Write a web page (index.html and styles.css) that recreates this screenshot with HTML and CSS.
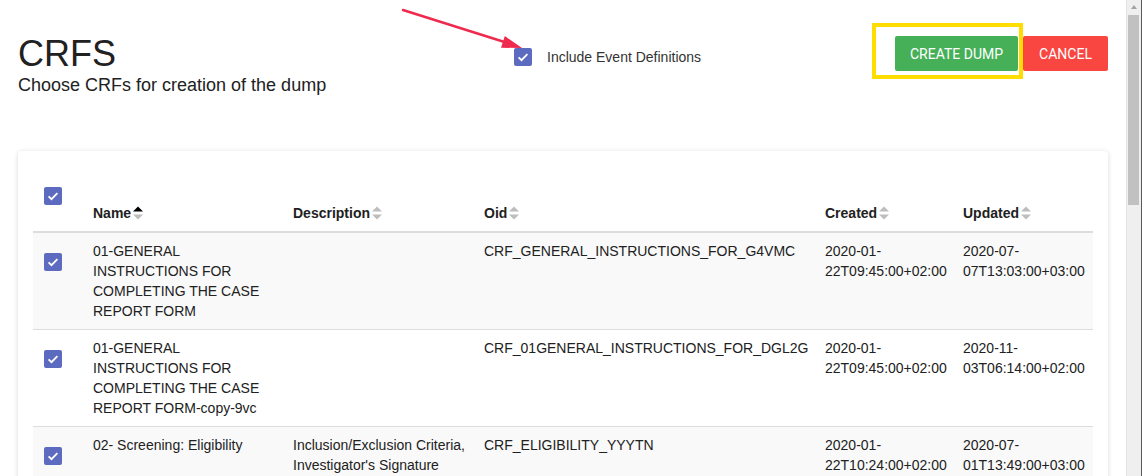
FILE: index.html
```html
<!DOCTYPE html>
<html>
<head>
<meta charset="utf-8">
<link rel="stylesheet" href="styles.css">
</head>
<body>
<div class="window">
  <div class="page">
    <svg class="annotation-arrow" width="600" height="80" viewBox="0 0 600 80">
      <line x1="403" y1="10" x2="506" y2="42.5" stroke="#ee2a4f" stroke-width="2.5" stroke-linecap="round"/>
      <polygon points="522,48 501,47.8 504.8,36" fill="#ee2a4f"/>
    </svg>
    <header class="top">
      <div class="titles">
        <h1 class="title">CRFS</h1>
        <p class="subtitle">Choose CRFs for creation of the dump</p>
      </div>
      <label class="include">
        <svg class="cb" width="18" height="18" viewBox="0 0 18 18"><rect width="18" height="18" rx="2" fill="#5c6bc0"/><path d="M4.6 9.3l2.9 2.9 5.9-6.1" fill="none" stroke="#fff" stroke-width="1.8"/></svg>
        <span>Include Event Definitions</span>
      </label>
      <div class="actions">
        <button class="btn btn-create">CREATE DUMP</button>
        <button class="btn btn-cancel">CANCEL</button>
        <div class="highlight"></div>
      </div>
    </header>

    <section class="card">
      <table class="crfs">
        <colgroup>
          <col class="c-check"><col class="c-name"><col class="c-desc"><col class="c-oid"><col class="c-date"><col class="c-date">
        </colgroup>
        <thead>
          <tr>
            <th class="check-cell"><svg class="cb" width="18" height="18" viewBox="0 0 18 18"><rect width="18" height="18" rx="2" fill="#5c6bc0"/><path d="M4.6 9.3l2.9 2.9 5.9-6.1" fill="none" stroke="#fff" stroke-width="1.8"/></svg></th>
            <th>Name<svg class="sort" width="10" height="14" viewBox="0 0 10 14"><path d="M0 5.5L5 0.5 10 5.5z" fill="#000"/><path d="M0 8.5L5 13.5 10 8.5z" fill="#bdbdbd"/></svg></th>
            <th>Description<svg class="sort" width="10" height="14" viewBox="0 0 10 14"><path d="M0 5.5L5 0.5 10 5.5z" fill="#bdbdbd"/><path d="M0 8.5L5 13.5 10 8.5z" fill="#bdbdbd"/></svg></th>
            <th>Oid<svg class="sort" width="10" height="14" viewBox="0 0 10 14"><path d="M0 5.5L5 0.5 10 5.5z" fill="#bdbdbd"/><path d="M0 8.5L5 13.5 10 8.5z" fill="#bdbdbd"/></svg></th>
            <th>Created<svg class="sort" width="10" height="14" viewBox="0 0 10 14"><path d="M0 5.5L5 0.5 10 5.5z" fill="#bdbdbd"/><path d="M0 8.5L5 13.5 10 8.5z" fill="#bdbdbd"/></svg></th>
            <th>Updated<svg class="sort" width="10" height="14" viewBox="0 0 10 14"><path d="M0 5.5L5 0.5 10 5.5z" fill="#bdbdbd"/><path d="M0 8.5L5 13.5 10 8.5z" fill="#bdbdbd"/></svg></th>
          </tr>
        </thead>
        <tbody>
          <tr>
            <td class="check-cell"><svg class="cb" width="18" height="18" viewBox="0 0 18 18"><rect width="18" height="18" rx="2" fill="#5c6bc0"/><path d="M4.6 9.3l2.9 2.9 5.9-6.1" fill="none" stroke="#fff" stroke-width="1.8"/></svg></td>
            <td>01-GENERAL INSTRUCTIONS FOR COMPLETING THE CASE REPORT FORM</td>
            <td></td>
            <td>CRF_GENERAL_INSTRUCTIONS_FOR_G4VMC</td>
            <td>2020-01-<wbr>22T09:45:00+02:00</td>
            <td>2020-07-<wbr>07T13:03:00+03:00</td>
          </tr>
          <tr>
            <td class="check-cell"><svg class="cb" width="18" height="18" viewBox="0 0 18 18"><rect width="18" height="18" rx="2" fill="#5c6bc0"/><path d="M4.6 9.3l2.9 2.9 5.9-6.1" fill="none" stroke="#fff" stroke-width="1.8"/></svg></td>
            <td>01-GENERAL INSTRUCTIONS FOR COMPLETING THE CASE REPORT FORM-copy-9vc</td>
            <td></td>
            <td>CRF_01GENERAL_INSTRUCTIONS_FOR_DGL2G</td>
            <td>2020-01-<wbr>22T09:45:00+02:00</td>
            <td>2020-11-<wbr>03T06:14:00+02:00</td>
          </tr>
          <tr>
            <td class="check-cell"><svg class="cb" width="18" height="18" viewBox="0 0 18 18"><rect width="18" height="18" rx="2" fill="#5c6bc0"/><path d="M4.6 9.3l2.9 2.9 5.9-6.1" fill="none" stroke="#fff" stroke-width="1.8"/></svg></td>
            <td>02- Screening: Eligibility</td>
            <td>Inclusion/Exclusion Criteria, Investigator's Signature</td>
            <td>CRF_ELIGIBILITY_YYYTN</td>
            <td>2020-01-<wbr>22T10:24:00+02:00</td>
            <td>2020-07-<wbr>01T13:49:00+03:00</td>
          </tr>
        </tbody>
      </table>
    </section>
  </div>
  <div class="scrollbar">
    <div class="sb-arrow"></div>
    <div class="sb-thumb"></div>
  </div>
</div>
</body>
</html>
```

FILE: styles.css
```css
html, body {
  margin: 0;
  padding: 0;
  background: #fff;
}
body {
  font-family: "Liberation Sans", Arial, sans-serif;
  color: #212121;
  font-size: 14px;
}
.window {
  display: flex;
  width: 1142px;
  height: 476px;
  overflow: hidden;
}
.page {
  position: relative;
  flex: 1;
  padding: 0 18px;
  overflow: hidden;
}
.annotation-arrow {
  position: absolute;
  left: 0;
  top: 0;
  z-index: 5;
}
.top {
  display: grid;
  grid-template-columns: 496px 1fr auto;
  align-items: start;
  padding-top: 35px;
}
.title {
  margin: 0;
  font-size: 36px;
  line-height: 38px;
  font-weight: 400;
  color: #212121;
}
.subtitle {
  margin: 0;
  font-size: 18px;
  line-height: 24px;
  color: #212121;
}
.include {
  display: flex;
  align-items: center;
  gap: 15px;
  margin-top: 13px;
  font-size: 14px;
  line-height: 18px;
  color: #333;
}
.cb {
  display: block;
}
.actions {
  position: relative;
  display: flex;
  gap: 5px;
  margin-top: 1px;
}
.btn {
  font-family: Roboto, "Liberation Sans", sans-serif;
  font-size: 14px;
  font-weight: 400;
  color: #fff;
  border: none;
  border-radius: 2px;
  height: 35px;
  padding: 0;
  white-space: nowrap;
  text-align: center;
}
.btn-create {
  background: #45b058;
  width: 123px;
}
.btn-cancel {
  background: #f94641;
  width: 85px;
}
.highlight {
  position: absolute;
  left: -23px;
  top: -13px;
  width: 151px;
  height: 56px;
  box-sizing: border-box;
  border: 4px solid #ffdd00;
}
.card {
  margin-top: 54px;
  background: #fff;
  border-radius: 4px;
  box-shadow: 0 1px 5px rgba(0, 0, 0, 0.16);
  padding: 15px;
}
.crfs {
  width: 1060px;
  table-layout: fixed;
  border-collapse: collapse;
}
.c-check { width: 52px; }
.c-name { width: 200px; }
.c-desc { width: 191px; }
.c-oid { width: 341px; }
.c-date { width: 138px; }
.crfs th {
  text-align: left;
  font-weight: 700;
  font-size: 14px;
  line-height: 20px;
  vertical-align: bottom;
  padding: 0 4px 8px 8px;
  border-bottom: 2px solid #ddd;
  white-space: nowrap;
}
.crfs th.check-cell {
  vertical-align: top;
  padding: 21px 0 26px 11px;
}
.sort {
  display: inline-block;
  vertical-align: -2px;
  margin-left: 2px;
}
.crfs td {
  vertical-align: top;
  padding: 8px 4px 8px 8px;
  line-height: 20px;
  border-top: 1px solid #ddd;
  color: #212121;
}
.crfs tbody tr:first-child td {
  border-top: none;
}
.crfs td.check-cell {
  padding: 20px 0 0 11px;
}
.crfs tbody tr:nth-child(odd) td {
  background: #f9f9f9;
}
.scrollbar {
  position: relative;
  width: 14px;
  height: 476px;
  background: #efefef;
  border-left: 1px solid #e4e4e4;
  border-right: 1px solid #5a5a5a;
  flex: none;
}
.sb-arrow {
  position: absolute;
  left: 3.5px;
  top: 5px;
  width: 0;
  height: 0;
  border-left: 3.5px solid transparent;
  border-right: 3.5px solid transparent;
  border-bottom: 4px solid #a3a3a3;
}
.sb-thumb {
  position: absolute;
  left: 1px;
  top: 15px;
  width: 11px;
  height: 190px;
  background: #c1c1c1;
}
```
